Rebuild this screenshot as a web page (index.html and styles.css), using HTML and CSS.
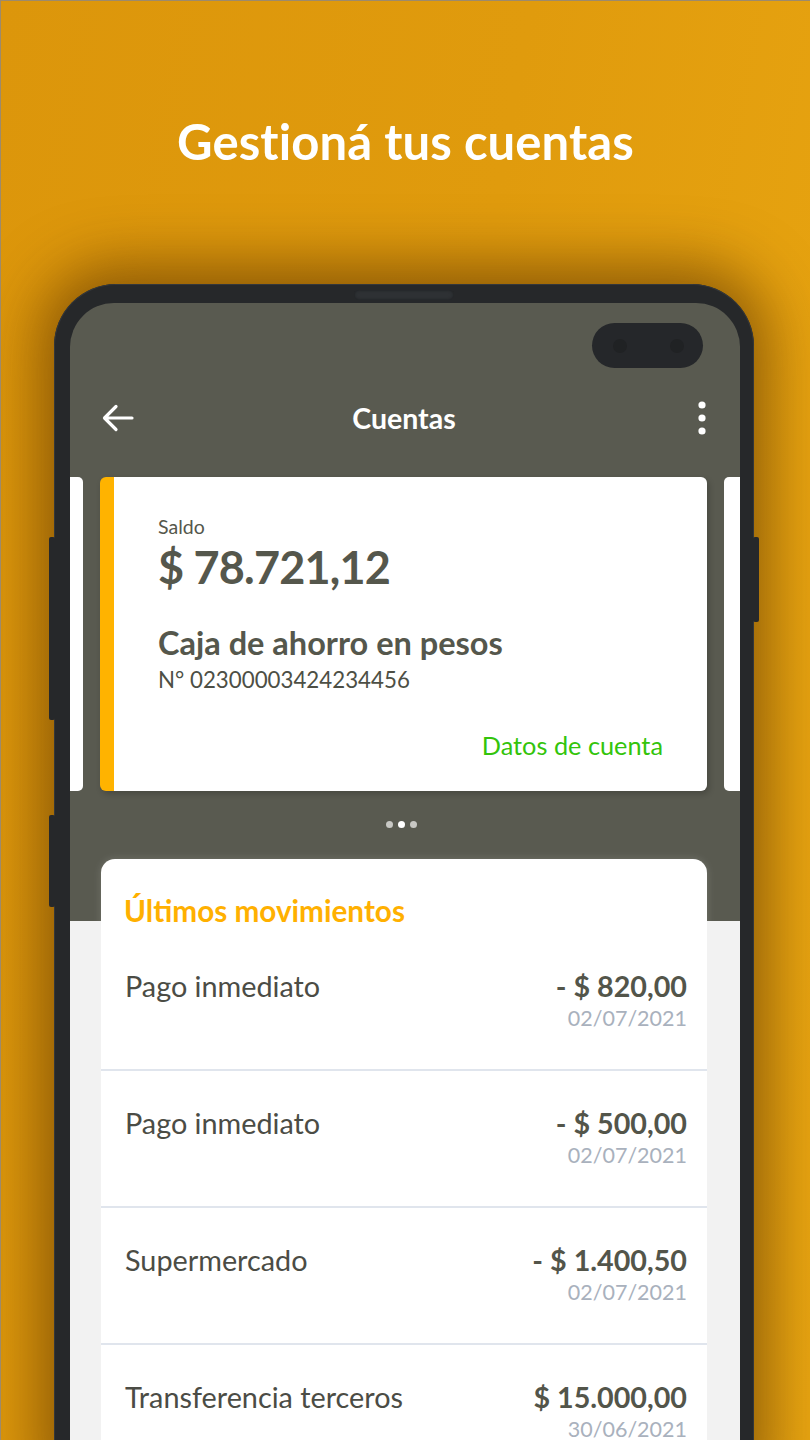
FILE: index.html
```html
<!DOCTYPE html>
<html lang="es">
<head>
<meta charset="utf-8">
<title>Gestioná tus cuentas</title>
<link rel="stylesheet" href="styles.css">
</head>
<body>
<div class="page">
  <h1 class="headline">Gestioná tus cuentas</h1>
  <div class="phone">
    <span class="side-btn btn-l1"></span>
    <span class="side-btn btn-l2"></span>
    <span class="side-btn btn-r1"></span>
    <span class="speaker"></span>
    <div class="screen">
      <div class="notch-row">
        <div class="camera"><span class="lens"></span><span class="lens"></span></div>
      </div>
      <div class="appbar">
        <span class="appbar-side">
          <svg class="icon-back" width="34" height="30" viewBox="0 0 34 30" aria-hidden="true">
            <path d="M31 15H4M15 3.5L3.5 15L15 26.5" fill="none" stroke="#fff" stroke-width="3.2" stroke-linecap="round" stroke-linejoin="round"/>
          </svg>
        </span>
        <span class="appbar-title">Cuentas</span>
        <span class="appbar-side appbar-side-right">
          <svg class="icon-more" width="10" height="34" viewBox="0 0 10 34" aria-hidden="true">
            <circle cx="5" cy="4" r="3.6" fill="#fff"/>
            <circle cx="5" cy="17" r="3.6" fill="#fff"/>
            <circle cx="5" cy="30" r="3.6" fill="#fff"/>
          </svg>
        </span>
      </div>
      <div class="carousel">
        <div class="peek peek-left"></div>
        <div class="acct-card">
          <div class="acct-label">Saldo</div>
          <div class="acct-balance">$ 78.721,12</div>
          <div class="acct-name">Caja de ahorro en pesos</div>
          <div class="acct-number">N° 02300003424234456</div>
          <div class="acct-link">Datos de cuenta</div>
        </div>
        <div class="peek peek-right"></div>
      </div>
      <div class="dots">
        <span class="dot"></span><span class="dot dot-active"></span><span class="dot"></span>
      </div>
      <div class="moves">
        <div class="moves-title">Últimos movimientos</div>
        <div class="move">
          <div class="move-name">Pago inmediato</div>
          <div class="move-right">
            <div class="move-amount">- $ 820,00</div>
            <div class="move-date">02/07/2021</div>
          </div>
        </div>
        <div class="move">
          <div class="move-name">Pago inmediato</div>
          <div class="move-right">
            <div class="move-amount">- $ 500,00</div>
            <div class="move-date">02/07/2021</div>
          </div>
        </div>
        <div class="move">
          <div class="move-name">Supermercado</div>
          <div class="move-right">
            <div class="move-amount">- $ 1.400,50</div>
            <div class="move-date">02/07/2021</div>
          </div>
        </div>
        <div class="move">
          <div class="move-name">Transferencia terceros</div>
          <div class="move-right">
            <div class="move-amount">$ 15.000,00</div>
            <div class="move-date">30/06/2021</div>
          </div>
        </div>
      </div>
    </div>
  </div>
</div>
</body>
</html>
```

FILE: styles.css
```css
* { box-sizing: border-box; }
html, body { margin: 0; padding: 0; }
body {
  font-family: Lato, "Open Sans", "Liberation Sans", sans-serif;
  width: 810px;
  height: 1440px;
  overflow: hidden;
}
.page {
  width: 810px;
  height: 1440px;
  overflow: hidden;
  background: linear-gradient(100deg, #dc960b 0%, #e09b0d 50%, #e9a611 100%);
  border-top: 1px solid #9c8a6c;
  border-left: 1px solid #9c8a6c;
  padding-top: 112px;
}
.headline {
  margin: 0;
  text-align: center;
  color: #fff;
  font-weight: 700;
  font-size: 49px;
  line-height: 56px;
  letter-spacing: 0.1px;
}
.phone {
  position: relative;
  margin-top: 115px;
  margin-left: 53px;
  width: 700px;
  height: 1200px;
  background: #26282a;
  border-radius: 62px 62px 0 0;
  padding: 19px 14px 0 16px;
  box-shadow: 0 -4px 60px 14px rgba(70, 35, 0, 0.55), inset 0 0 0 1px #34373a;
}
.side-btn {
  position: absolute;
  width: 6px;
  background: #26282a;
  border-radius: 2px;
}
.btn-l1 { left: -5px; top: 253px; height: 183px; }
.btn-l2 { left: -5px; top: 531px; height: 92px; }
.btn-r1 { right: -5px; top: 253px; height: 85px; }
.speaker {
  position: absolute;
  left: 300px;
  top: 6px;
  width: 100px;
  height: 10px;
  border-radius: 5px;
  background: #2e3134;
  box-shadow: inset 0 0 3px #1c1e20;
}
.screen {
  width: 670px;
  height: 1200px;
  border-radius: 44px 44px 0 0;
  background: linear-gradient(#595a50 0, #595a50 618px, #f2f2f2 618px);
  overflow: hidden;
}
.notch-row {
  display: flex;
  justify-content: flex-end;
  padding: 20px 37px 0 0;
}
.camera {
  width: 111px;
  height: 45px;
  border-radius: 23px;
  background: #25272a;
  display: flex;
  align-items: center;
  justify-content: space-between;
  padding: 0 19px 0 21px;
}
.lens {
  width: 14px;
  height: 14px;
  border-radius: 50%;
  background: #202224;
}
.appbar {
  margin-top: 22px;
  height: 56px;
  display: flex;
  align-items: center;
  justify-content: space-between;
  padding: 0 33px 0 31px;
}
.appbar-side {
  width: 60px;
  display: flex;
  align-items: center;
}
.appbar-side-right { justify-content: flex-end; }
.appbar-title {
  color: #fff;
  font-weight: 700;
  font-size: 28.5px;
}
.carousel {
  margin-top: 31px;
  display: flex;
  gap: 17px;
  height: 314px;
}
.peek {
  background: #fff;
  height: 100%;
}
.peek-left { width: 13px; border-radius: 0 5px 5px 0; }
.peek-right { width: 16px; border-radius: 5px 0 0 5px; }
.acct-card {
  width: 607px;
  flex: none;
  background: #fff;
  border-radius: 6px;
  border-left: 14px solid #ffb300;
  padding: 38px 44px 0 44px;
  color: #55574c;
  display: flex;
  flex-direction: column;
  box-shadow: 2px 3px 6px rgba(0,0,0,0.2);
}
.acct-label {
  font-size: 19.5px;
  line-height: 24px;
}
.acct-balance {
  margin-top: 2px;
  font-size: 45px;
  font-weight: 700;
  line-height: 52px;
  letter-spacing: -0.8px;
}
.acct-name {
  margin-top: 31px;
  font-size: 32.5px;
  font-weight: 700;
  line-height: 38px;
}
.acct-number {
  margin-top: 5px;
  font-size: 22.3px;
  line-height: 26px;
  color: #4d4f45;
}
.acct-link {
  margin-top: 37px;
  align-self: flex-end;
  color: #33c40b;
  font-size: 25.3px;
  line-height: 30px;
}
.dots {
  margin-top: 30px;
  height: 7px;
  display: flex;
  justify-content: center;
  gap: 5px;
  padding-right: 8px;
}
.dot {
  width: 7px;
  height: 7px;
  border-radius: 50%;
  background: #c8c8c4;
}
.dot-active { background: #fff; }
.moves {
  margin: 31px 0 0 31px;
  width: 606px;
  background: #fff;
  border-radius: 14px 14px 0 0;
  box-shadow: 0 0 8px rgba(255,255,255,0.15);
}
.moves-title {
  color: #ffb000;
  font-weight: 700;
  font-size: 29.7px;
  line-height: 36px;
  padding: 34px 0 5px 23px;
}
.move {
  height: 137px;
  border-bottom: 2px solid #e0e5ed;
  display: flex;
  justify-content: space-between;
  align-items: flex-start;
  padding: 35px 20px 0 24px;
}
.move-name {
  color: #4b4c45;
  font-size: 28.8px;
  line-height: 34px;
}
.move-right {
  text-align: right;
}
.move-amount {
  color: #53554a;
  font-size: 28.7px;
  font-weight: 700;
  line-height: 34px;
}
.move-date {
  margin-top: 2px;
  color: #a9b1bd;
  font-size: 21.5px;
  line-height: 26px;
}
```
